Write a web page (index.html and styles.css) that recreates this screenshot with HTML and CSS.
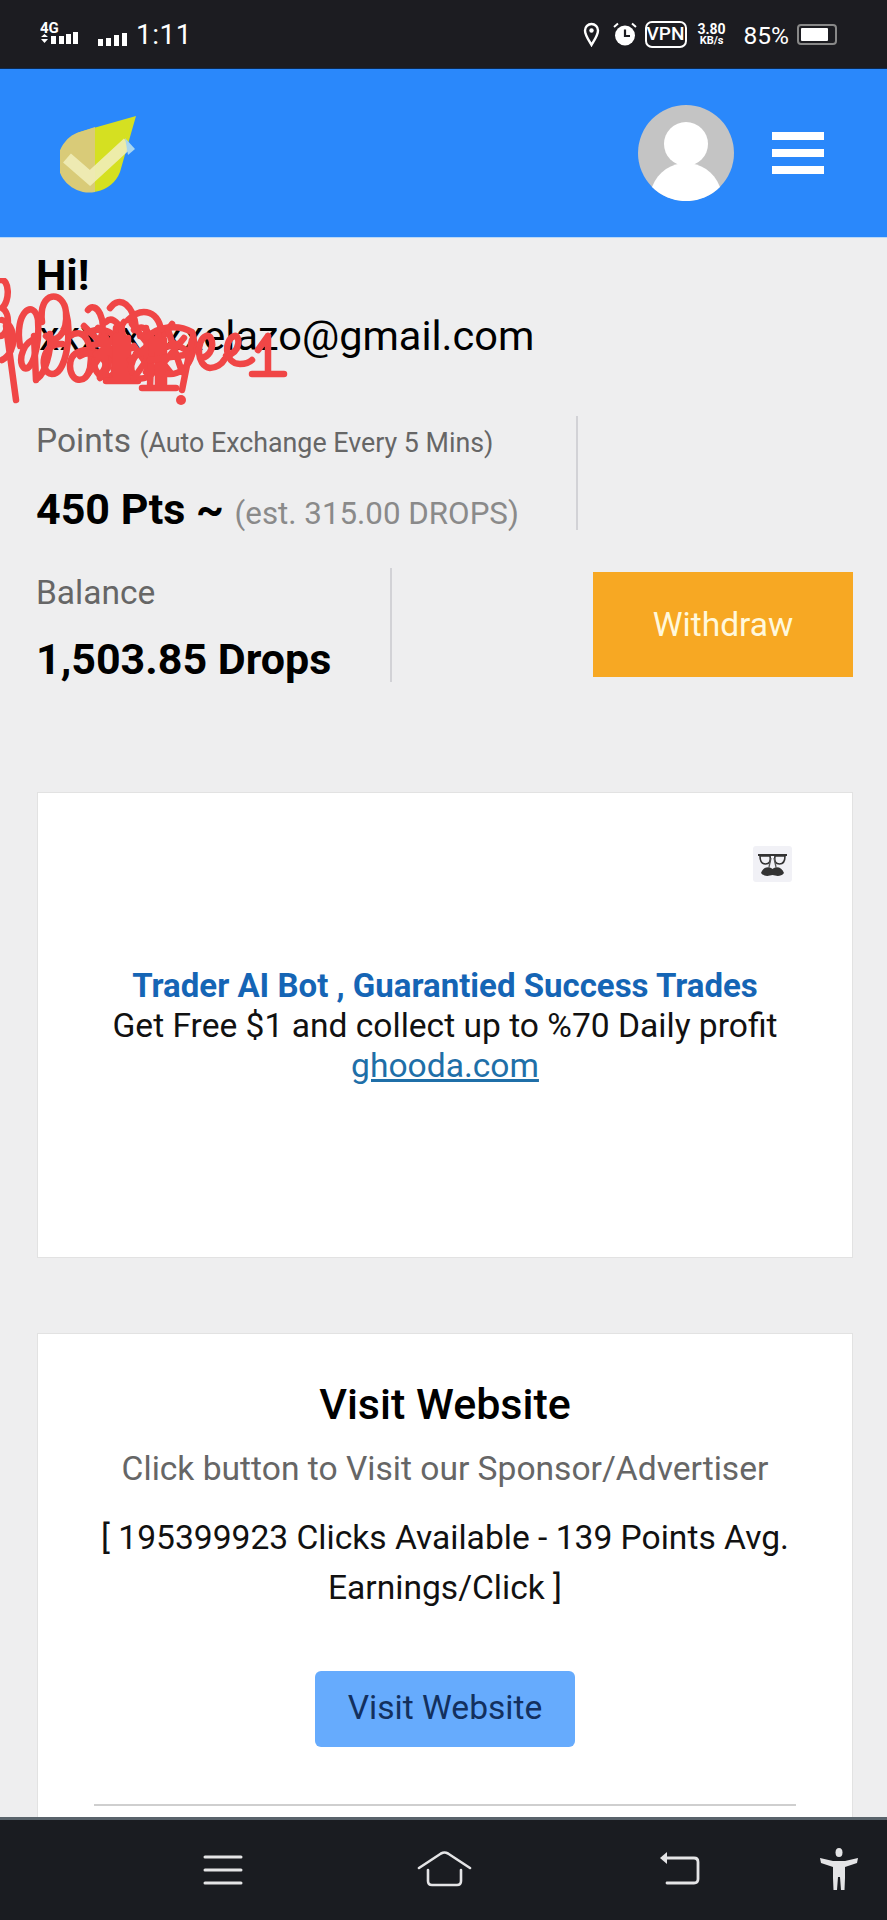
FILE: index.html
```html
<!DOCTYPE html>
<html lang="en">

<head>
  <meta charset="UTF-8" />
  <meta name="viewport" content="width=device-width, initial-scale=1.0" />
  <title>Dashboard</title>
  <link rel="stylesheet" href="styles.css">
</head>

<body>
  <div class="page">
    <div class="status-bar">
      <div class="status-left">
        <svg class="signal-one" width="40" height="32" viewBox="0 0 40 32">
          <text x="0" y="15" class="net-label">4G</text>
          <path d="M1 19l3.500-3 3.500 3zM1 21l3.500 4 3.500-4z" fill="#fff" />
          <path d="M11 18h5v8h-5zM19 18h5v8h-5zM26 16h5v10h-5zM33 14h5v12h-5z" fill="#fff" />
        </svg>
        <svg class="signal-two" width="30" height="14" viewBox="0 0 30 14">
          <path d="M0 7h5v7H0zM8 6h5v8H8zM16 3h5v11h-5zM24 1h5v13h-5z" fill="#fff" />
        </svg>
        <span class="clock">1:11</span>
      </div>
      <div class="status-right">
        <svg class="pin" width="17" height="25" viewBox="0 0 17 25">
          <path d="M8.500 23C5 17 2 13 2 8.500a6.500 6.500 0 0 1 13 0C15 13 12 17 8.500 23z" fill="none" stroke="#fff" stroke-width="2.400" />
          <circle cx="8.500" cy="8.500" r="2.200" fill="#fff" />
        </svg>
        <svg class="alarm" width="24" height="24" viewBox="0 0 24 24">
          <circle cx="12" cy="13.500" r="10" fill="#fff" />
          <path d="M12 7.500v6.500h5" fill="none" stroke="#1c1c21" stroke-width="2.200" />
          <path d="M1 5l4-3.500M23 5l-4-3.500" stroke="#fff" stroke-width="2" />
        </svg>
        <span class="vpn">VPN</span>
        <span class="speed"><b>3.80</b><b class="speed-unit">KB/s</b></span>
        <span class="battery-pct">85%</span>
        <span class="battery"><span class="battery-fill"></span></span>
      </div>
    </div>

    <header class="top-nav">
      <svg class="logo" width="80" height="78" viewBox="0 0 80 78">
        <path d="M76 0 L23 15 A31 31 0 1 0 60 56 Z" fill="#d5e021" />
        <path d="M35 11 L23 15 A31 31 0 0 0 35 76 Z" fill="#d9cb78" />
        <path d="M7 42 L30 62 L68 27" fill="none" stroke="#efedb8" stroke-opacity="0.9" stroke-width="12" />
        <path d="M65 22 L75 33 L68 39 Z" fill="#a9d6ee" />
      </svg>
      <div class="top-actions">
        <svg class="avatar" width="96" height="96" viewBox="0 0 96 96">
          <circle cx="48" cy="48" r="48" fill="#c4c4c4" />
          <circle cx="48" cy="39" r="22" fill="#fff" />
          <path d="M14 82 C20 66 34 58 48 58 C62 58 76 66 82 82 A48 48 0 0 1 14 82 Z" fill="#fff" />
        </svg>
        <div class="burger">
          <span></span>
          <span></span>
          <span></span>
        </div>
      </div>
    </header>

    <main class="content">
      <div class="greeting">
        <div class="hi">Hi!</div>
        <div class="email">xxxxxxxxelazo@gmail.com</div>
        <!-- red scribble on top of the address -->
        <svg class="scribble" width="290" height="136" viewBox="0 0 290 136">
          <g fill="none" stroke="#f04646" stroke-width="6.500" stroke-linecap="round" stroke-linejoin="round">
            <path d="M0 2 C10 0 10 24 2 30 C12 36 8 58 0 58" />
            <path d="M2 42 C16 46 18 74 2 82 M6 48 L16 122" />
            <path d="M20 68 C14 34 34 20 38 42 C40 68 32 94 24 90 C16 82 26 60 36 62" />
            <path d="M42 44 C38 12 64 12 66 34 C68 58 54 66 46 58 M66 34 C72 56 66 96 52 96 C38 94 42 64 62 66" />
            <path d="M34 58 L36 102 M50 56 C52 74 44 96 38 100" />
            <path d="M70 58 C84 48 94 66 90 90 C86 108 70 104 70 88 C70 72 86 70 96 74" />
            <path d="M88 32 C96 22 108 42 100 62 M110 30 C120 16 134 28 136 50 M106 44 C116 34 130 58 124 94" />
            <path d="M84 56 C104 46 122 54 120 82 C118 104 96 104 94 86 C96 68 114 68 126 76" />
            <path d="M90 68 C106 62 112 70 108 90 M98 50 C112 60 112 82 100 98 M80 78 C96 68 118 88 100 100" />
            <path d="M84 48 L128 92 M124 44 L88 96 M96 76 L132 70 M104 58 L106 98 M116 50 L114 96" />
            <path d="M106 103 L138 103 M122 50 L122 103 M116 58 L116 100 M128 60 L128 100" />
            <path d="M128 42 C142 28 160 32 162 58 C164 84 152 104 138 100 C124 94 132 68 158 70" />
            <path d="M134 52 C150 42 152 64 150 82 M140 58 C158 54 160 74 146 94 M134 68 L152 94 M130 82 L160 58" />
            <path d="M132 46 L170 94 M172 46 L134 100 M136 76 L178 66 M146 50 L148 98" />
            <path d="M142 110 L176 110 M158 54 L158 110 M152 62 L150 108 M164 62 L164 106" />
            <path d="M146 60 C158 48 178 46 192 54 C198 68 190 98 168 96" />
            <path d="M192 62 L182 112" />
            <path d="M168 52 L182 94 M150 82 L192 76 M172 64 L186 72 M166 82 L184 60" />
            <path d="M202 80 C216 76 214 56 206 58 C196 62 196 88 210 90 C216 90 222 86 224 82" />
            <path d="M226 78 C242 74 240 56 234 58 C224 62 224 86 240 86 C246 86 250 84 252 82" />
            <path d="M252 96 L284 96 M268 58 L268 96 M268 58 L258 72" />
          </g>
          <circle cx="181" cy="122" r="5" fill="#f04646" />
        </svg>
      </div>

      <div class="stat-row">
        <div class="stat stat-points">
          <div class="stat-label">Points <small>(Auto Exchange Every 5 Mins)</small></div>
          <div class="stat-value">450 Pts ~ <small>(est. 315.00 DROPS)</small></div>
        </div>
      </div>

      <div class="stat-row stat-row-balance">
        <div class="stat stat-balance">
          <div class="stat-label">Balance</div>
          <div class="stat-value">1,503.85 Drops</div>
        </div>
        <a class="btn-withdraw" href="#">Withdraw</a>
      </div>

      <section class="card ad-card">
        <svg class="ad-badge" width="39" height="36" viewBox="0 0 39 36">
          <path d="M5 9h29" stroke="#333" stroke-width="1.800" />
          <path d="M7 10h10c1 6-1 8-4.500 8-3.500 0-5.500-2-5.500-8zM22 10h10c0 6-2 8-5.500 8-3.500 0-5.500-2-4.500-8z" fill="none" stroke="#333" stroke-width="1.600" />
          <path d="M18 12l-2 9M21 12l2 9" fill="none" stroke="#555" stroke-width="1.300" />
          <path d="M8 27c2-6 8-7 11.500-4 3.500-3 9.500-2 11.500 4-3 4-8 3-11.500 2-3.500 1-8.500 2-11.500-2z" fill="#333" />
        </svg>
        <div class="ad-title">Trader AI Bot , Guarantied Success Trades</div>
        <div class="ad-text">Get Free $1 and collect up to %70 Daily profit</div>
        <a class="ad-link" href="#">ghooda.com</a>
      </section>

      <section class="card visit-card">
        <h2>Visit Website</h2>
        <p class="visit-sub">Click button to Visit our Sponsor/Advertiser</p>
        <p class="visit-info">[ 195399923 Clicks Available - 139 Points Avg. Earnings/Click ]</p>
        <a class="btn-visit" href="#">Visit Website</a>
        <hr>
      </section>
    </main>

    <nav class="nav-bar">
      <svg class="nav-menu" width="40" height="30" viewBox="0 0 40 30">
        <path d="M2 2h36M2 15h36M2 28h36" stroke="#e4e4e6" stroke-width="3" stroke-linecap="round" />
      </svg>
      <svg class="nav-home" width="55" height="36" viewBox="0 0 55 36">
        <path d="M2 17 L24 2.500 Q27.500 0.500 31 2.500 L53 17" fill="none" stroke="#e4e4e6" stroke-width="2.600" stroke-linecap="round" />
        <path d="M11 19v11q0 4 4 4h25q4 0 4-4V19" fill="none" stroke="#e4e4e6" stroke-width="2.600" stroke-linecap="round" />
      </svg>
      <svg class="nav-back" width="41" height="34" viewBox="0 0 41 34">
        <path d="M1 7 L8 1 V13 Z" fill="#e4e4e6" />
        <path d="M6 7h29q4 0 4 4v17q0 4-4 4H8" fill="none" stroke="#e4e4e6" stroke-width="2.800" stroke-linecap="round" />
      </svg>
      <svg class="nav-access" width="38" height="42" viewBox="0 0 38 42">
        <ellipse cx="19" cy="4.500" rx="3.500" ry="4.500" fill="#e4e4e6" />
        <path d="M0 10 L13 13 H25 L38 10 L37 15 L25 19 V30 L24.500 42 H21 L20 29 H18 L17 42 H13.500 L13 30 V19 L1 15 Z" fill="#e4e4e6" />
      </svg>
    </nav>
  </div>
</body>

</html>
```

FILE: styles.css
```css
* {
  box-sizing: border-box;
}

body {
  margin: 0;
  font-family: Roboto, "Liberation Sans", sans-serif;
  background-color: #eeeeef;
  color: #000;
}

a {
  text-decoration: none;
}

.page {
  height: 1920px;
  display: flex;
  flex-direction: column;
  overflow: hidden;
}

/* phone status bar */
.status-bar {
  height: 69px;
  flex: none;
  background-color: #1c1c21;
  border-bottom: 1px solid #0a2a55;
  color: #fff;
  display: flex;
  justify-content: space-between;
  align-items: center;
  padding: 0 50px 0 40px;
}

.status-left,
.status-right {
  display: flex;
  align-items: center;
}

.net-label {
  font-family: Roboto, sans-serif;
  font-weight: 700;
  font-size: 15px;
  fill: #fff;
}

.signal-two {
  margin-left: 18px;
  margin-top: 9px;
}

.clock {
  font-size: 28px;
  margin-left: 8px;
  letter-spacing: 0.5px;
}

.pin {
  margin-right: 13px;
}

.alarm {
  margin-right: 8px;
}

.vpn {
  border: 2.5px solid #fff;
  border-radius: 7px;
  font-size: 19px;
  font-weight: 500;
  line-height: 22px;
  height: 27px;
  width: 42px;
  text-align: center;
}

.speed {
  display: flex;
  flex-direction: column;
  align-items: center;
  width: 30px;
  margin-left: 10px;
  font-size: 14px;
  line-height: 13px;
}

.speed-unit {
  font-size: 11px;
  line-height: 10px;
}

.battery-pct {
  font-size: 24.5px;
  margin-left: 17px;
  margin-top: 3px;
}

.battery {
  width: 40px;
  height: 21px;
  margin-left: 8px;
  border: 2px solid #888;
  border-radius: 4px;
  padding: 2px;
  display: block;
}

.battery-fill {
  display: block;
  width: 85%;
  height: 100%;
  background-color: #fff;
  border-radius: 1px;
}

/* blue header */
.top-nav {
  height: 169px;
  flex: none;
  background-color: #2a88fb;
  border-bottom: 1px solid #b9d8f7;
  display: flex;
  justify-content: space-between;
  align-items: center;
  padding: 0 63px 0 60px;
}

.logo {
  margin-top: 3px;
}

.top-actions {
  display: flex;
  align-items: center;
  gap: 38px;
}

.burger {
  width: 52px;
}

.burger span {
  display: block;
  height: 8px;
  background-color: #fff;
  margin-bottom: 9px;
}

.burger span:last-child {
  margin-bottom: 0;
}

/* page body */
.content {
  flex: 1;
  min-height: 0;
  padding: 12px 34px 0 37px;
}

.greeting {
  position: relative;
}

.hi {
  font-size: 43px;
  line-height: 50px;
  font-weight: 700;
  margin-left: -1px;
}

.email {
  font-size: 41.5px;
  line-height: 60px;
  margin-top: 6px;
  margin-left: 2px;
  white-space: nowrap;
}

.scribble {
  position: absolute;
  left: -37px;
  top: 28px;
}

.stat-row {
  display: flex;
  margin-top: 50px;
  align-items: flex-start;
}

.stat-row-balance {
  margin-top: 38px;
}

.stat {
  height: 114px;
  padding-top: 5px;
  border-right: 2px solid #d2d2d6;
}

.stat-points {
  width: 541px;
}

.stat-balance {
  width: 355px;
}

.stat-label {
  font-size: 33.5px;
  line-height: 40px;
  color: #666;
  margin-bottom: 21px;
  margin-left: -1px;
  white-space: nowrap;
}

.stat-label small {
  font-size: 26.8px;
}

.stat-value {
  font-size: 43px;
  line-height: 50px;
  font-weight: 700;
  margin-left: -1px;
  white-space: nowrap;
}

.stat-value small {
  font-size: 31.3px;
  font-weight: 400;
  color: #8a8a8a;
}

.btn-withdraw {
  width: 260px;
  height: 105px;
  margin-top: 4px;
  margin-left: auto;
  background-color: #f7a823;
  color: #fff8dc;
  font-size: 33.6px;
  display: flex;
  align-items: center;
  justify-content: center;
}

.card {
  position: relative;
  width: 816px;
  background-color: #fff;
  border: 1px solid #e2e2e2;
  text-align: center;
}

.ad-card {
  height: 466px;
  margin-top: 110px;
  padding-top: 173px;
}

.ad-badge {
  position: absolute;
  top: 53px;
  right: 60px;
  background-color: #f1f1f6;
  border-radius: 3px;
}

.ad-title {
  font-size: 33px;
  line-height: 40px;
  font-weight: 700;
  color: #1565b5;
}

.ad-text {
  font-size: 33.6px;
  line-height: 40px;
  color: #111;
}

.ad-link {
  font-size: 33.6px;
  line-height: 40px;
  color: #1f6fa8;
  text-decoration: underline;
}

.visit-card {
  margin-top: 75px;
  padding: 45px 56px 40px;
}

.visit-card h2 {
  margin: 0;
  font-size: 43px;
  line-height: 50px;
  font-weight: 500;
}

.visit-sub {
  margin: 20px 0 0;
  font-size: 33.6px;
  line-height: 40px;
  color: #666;
  white-space: nowrap;
}

.visit-info {
  margin: 24px -10px 0;
  font-size: 33.6px;
  line-height: 50px;
  color: #111;
}

.btn-visit {
  display: block;
  width: 260px;
  height: 76px;
  margin: 58px auto 0;
  background-color: #66abfd;
  color: #13305e;
  border-radius: 6px;
  font-size: 33.6px;
  line-height: 74px;
}

.visit-card hr {
  margin: 57px 0 0;
  border: 0;
  height: 2px;
  background-color: #cfcfcf;
}

/* phone bottom bar */
.nav-bar {
  height: 103px;
  flex: none;
  position: relative;
  background-color: #1a1c21;
  border-top: 3px solid #59636b;
  display: flex;
  align-items: flex-start;
  padding-left: 203px;
}

.nav-menu {
  margin-top: 35px;
}

.nav-home {
  margin-left: 174px;
  margin-top: 31px;
}

.nav-back {
  margin-left: 187px;
  margin-top: 31px;
}

.nav-access {
  margin-left: 120px;
  margin-top: 28px;
}
```
